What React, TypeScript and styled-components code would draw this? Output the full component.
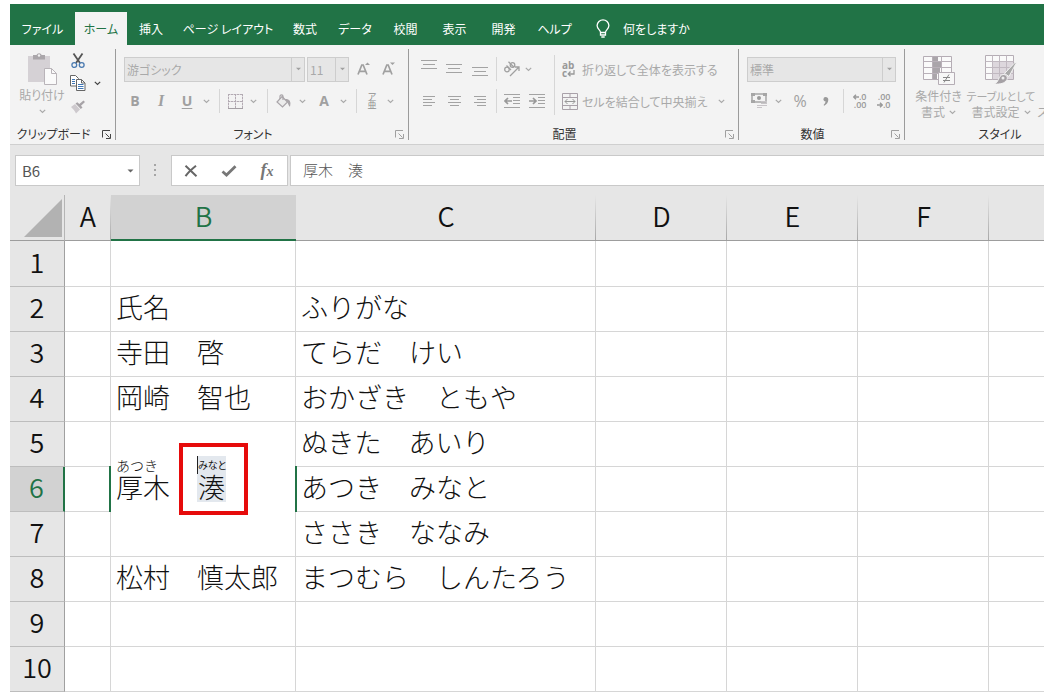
import React from "react";
import styled, { createGlobalStyle, css } from "styled-components";

const uiFont = `"Noto Sans CJK JP", "Noto Sans", sans-serif`;
const green = "#217346";
const muted = "#a9a9a9";

const GlobalStyle = createGlobalStyle`
  *, *::before, *::after { box-sizing: border-box; }
  body { margin: 0; background: #fff; font-family: ${uiFont}; }
  button, input, select { font: inherit; color: inherit; margin: 0; padding: 0; border: 0; background: none; border-radius: 0; }
  svg { display: block; flex: none; }
`;

const Window = styled.main`
  margin: 4px 10px;
  overflow: hidden;
`;

/* ---------- tab strip ---------- */

const TabStrip = styled.nav`
  display: flex;
  align-items: stretch;
  height: 41px;
  padding-top: 8px;
  background: ${green};
  font-size: 12px;
  font-feature-settings: "palt";
`;

const Tab = styled.button<{ $width: number; $active?: boolean }>`
  flex: 0 0 ${(p) => p.$width}px;
  white-space: nowrap;
  color: ${(p) => (p.$active ? green : "#fff")};
  background: ${(p) => (p.$active ? "#f3f3f3" : "transparent")};
`;

const TellMe = styled.button`
  display: flex;
  align-items: center;
  gap: 13px;
  margin-left: 15px;
  color: #fff;
  white-space: nowrap;
`;

/* ---------- ribbon ---------- */

const Ribbon = styled.div`
  display: flex;
  height: 100px;
  padding-top: 4px;
  overflow: hidden;
  background: #f3f3f3;
  border-bottom: 1px solid #cfcfcf;
  color: ${muted};
  font-size: 12px;
  font-feature-settings: "palt";
`;

const GroupBox = styled.section<{ $width: number; $last?: boolean }>`
  display: flex;
  flex-direction: column;
  flex: 0 0 ${(p) => p.$width}px;
  height: 91px;
  padding-top: 4px;
  border-right: ${(p) => (p.$last ? "0" : "1px solid #9b9b9b")};
`;

const GroupBody = styled.div`
  display: flex;
  flex: none;
  height: 72px;
`;

const GroupFooter = styled.footer`
  display: flex;
  flex: none;
  align-items: center;
  height: 18px;
  color: #333;
`;

const GroupLabel = styled.span`
  flex: 1;
  text-align: center;
  line-height: 18px;
`;

const Launcher = styled.button<{ $dark?: boolean }>`
  width: 18px;
  height: 18px;
  padding-left: 5px;
  color: ${(p) => (p.$dark ? "#444" : "#a0a0a0")};
`;

const Rows = styled.div<{ $indent: number; $width?: number }>`
  display: flex;
  flex-direction: column;
  flex: ${(p) => (p.$width ? `0 0 ${p.$width}px` : "1")};
  padding-left: ${(p) => p.$indent}px;
`;

const ToolRow = styled.div<{ $inset?: boolean }>`
  display: flex;
  align-items: center;
  height: 32px;
  padding-left: ${(p) => (p.$inset ? 2 : 0)}px;
`;

const Tool = styled.button<{ $width: number }>`
  display: flex;
  align-items: center;
  justify-content: center;
  flex: 0 0 ${(p) => p.$width}px;
  height: 24px;
  line-height: 24px;
`;

const Glyph = styled.span<{ $kind?: "italic" | "underline" | "percent" }>`
  font-family: "Open Sans", "Noto Sans", sans-serif;
  font-weight: 700;
  font-size: 14px;
  color: #a0a0a0;
  ${(p) => p.$kind === "italic" && css`font-family: "Liberation Serif", serif; font-style: italic; font-size: 16px;`}
  ${(p) => p.$kind === "underline" && css`text-decoration: underline; text-underline-offset: 2px;`}
  ${(p) => p.$kind === "percent" && css`font-weight: 400; font-size: 16px;`}
`;

const Divider = styled.span<{ $width: number }>`
  display: flex;
  justify-content: center;
  flex: 0 0 ${(p) => p.$width}px;
  &::before {
    content: "";
    width: 1px;
    height: 24px;
    background: #d6d6d6;
  }
`;

const TallDivider = styled.span`
  width: 1px;
  height: 60px;
  margin-top: 2px;
  background: #d6d6d6;
`;

const TextTool = styled.button`
  display: flex;
  align-items: center;
  gap: 4px;
  white-space: nowrap;
`;

const Combo = styled.label<{ $width: number }>`
  display: flex;
  flex: 0 0 ${(p) => p.$width}px;
  height: 25px;
  margin-right: 2px;
  background: #e6e6e6;
  border: 1px solid #cdcdcd;
`;

const ComboSelect = styled.select`
  flex: 1;
  min-width: 0;
  padding-left: 2px;
  appearance: none;
  opacity: 1;
`;

const ComboArrow = styled.span`
  display: flex;
  align-items: center;
  justify-content: center;
  width: 13px;
  border-left: 1px solid #cdcdcd;
`;

const PasteButton = styled.button`
  display: flex;
  flex-direction: column;
  align-items: center;
  width: 52px;
  height: 66px;
  margin-left: 6px;
  white-space: nowrap;
  line-height: 16px;
  svg:last-child { margin-top: 6px; }
`;

const ClipColumn = styled.div`
  display: flex;
  flex-direction: column;
`;

const ClipRow = styled.div`
  display: flex;
  align-items: center;
  height: 24px;
  &:first-child { height: 16px; margin-bottom: 2px; }
`;

const StyleButton = styled.button<{ $width: number }>`
  display: flex;
  flex-direction: column;
  align-items: center;
  flex: 0 0 ${(p) => p.$width}px;
  min-width: 0;
  height: 70px;
  padding-top: 2px;
  white-space: nowrap;
  line-height: 16px;
`;

const StyleLine = styled.span<{ $compact?: boolean }>`
  display: flex;
  align-items: center;
  gap: 4px;
  height: 16px;
  font-size: ${(p) => (p.$compact ? 11 : 12)}px;
`;

const StyleArt = styled.span`
  height: 33px;
`;

/* ---------- formula bar ---------- */

const FormulaBar = styled.div`
  display: flex;
  align-items: flex-start;
  height: 50px;
  padding: 10px 0 0 5px;
  background: #e6e6e6;
  color: #555;
`;

const NameBox = styled.div`
  display: flex;
  align-items: center;
  width: 125px;
  height: 31px;
  background: #fff;
  border: 1px solid #c9c9c9;
`;

const NameInput = styled.input`
  flex: 1;
  min-width: 0;
  height: 29px;
  padding-left: 6px;
  font-size: 15px;
`;

const NameArrow = styled.button`
  display: flex;
  align-items: center;
  justify-content: center;
  width: 18px;
  height: 29px;
`;

const Grip = styled.span`
  display: flex;
  align-items: center;
  justify-content: center;
  width: 31px;
  height: 31px;
`;

const FormulaButtons = styled.div`
  display: flex;
  align-items: center;
  width: 117px;
  height: 31px;
  background: #fff;
  border: 1px solid #c9c9c9;
`;

const FormulaInput = styled.input`
  flex: 1;
  min-width: 0;
  height: 31px;
  margin-left: 2px;
  padding: 0 0 2px 12px;
  background: #fff;
  border: 1px solid #c9c9c9;
  border-right: 0;
  font-size: 15px;
  font-weight: 300;
`;

/* ---------- worksheet ---------- */

const Sheet = styled.table`
  width: 100%;
  table-layout: fixed;
  border-collapse: separate;
  border-spacing: 0;
  font-size: 27px;
  font-weight: 300;
  line-height: 40px;
  color: #111;
  tbody tr:first-child > * { height: 46px; }
`;

const headLine = "linear-gradient(to bottom, #e6e6e6, #a8a8a8)";

const Corner = styled.th`
  height: 46px;
  padding: 0 2px 3px 0;
  vertical-align: bottom;
  background: #e6e6e6;
  border-right: 1px solid #b5b5b5;
  border-bottom: 1px solid #9d9d9d;
  svg { margin-left: auto; }
`;

const ColumnHead = styled.th<{ $active?: boolean }>`
  height: 46px;
  padding: 0 0 3px;
  font-weight: 350;
  color: ${(p) => (p.$active ? green : "#111")};
  background: ${(p) => (p.$active ? "#d2d2d2" : `${headLine} right / 1px 100% no-repeat #e6e6e6`)};
  border-bottom: ${(p) => (p.$active ? `2px solid ${green}` : "1px solid #9d9d9d")};
  &:last-child { background: #e6e6e6; }
`;

const RowHead = styled.th<{ $active?: boolean }>`
  height: 45px;
  padding: 0 0 4px;
  font-weight: 350;
  color: ${(p) => (p.$active ? green : "#111")};
  background: ${(p) => (p.$active ? "#d2d2d2" : "#e6e6e6")};
  border-bottom: 1px solid #bdbdbd;
  border-right: ${(p) => (p.$active ? `2px solid ${green}` : "1px solid #a0a0a0")};
`;

const Cell = styled.td`
  height: 45px;
  padding: 0 0 4px 5px;
  white-space: nowrap;
  border-right: 1px solid #d6d6d6;
  border-bottom: 1px solid #d6d6d6;
  &:last-child { border-right: 0; }
`;

const EditingCell = styled(Cell)`
  position: relative;
  padding: 0;
`;

const EditLine = styled.div`
  display: flex;
  align-items: flex-end;
  height: 80px;
  margin-bottom: 54px;
  padding-left: 5px;
`;

const Phonetic = styled.span<{ $selected?: boolean }>`
  display: flex;
  flex-direction: column;
  width: ${(p) => (p.$selected ? 29 : 54)}px;
  height: 46px;
  margin-left: ${(p) => (p.$selected ? 27 : 0)}px;
  padding-left: ${(p) => (p.$selected ? 1 : 0)}px;
  background: ${(p) => (p.$selected ? "#e3e8ee" : "transparent")};
`;

const Reading = styled.span<{ $tight?: boolean }>`
  height: 16px;
  line-height: 18px;
  white-space: nowrap;
  font-size: ${(p) => (p.$tight ? 10 : 14)}px;
  font-weight: ${(p) => (p.$tight ? 400 : 300)};
  font-feature-settings: ${(p) => (p.$tight ? `"palt"` : "normal")};
`;

const BaseText = styled.span`
  height: 30px;
  line-height: 30px;
`;

const CellEdge = styled.span<{ $side: "left" | "right" }>`
  position: absolute;
  top: 44px;
  ${(p) => p.$side}: -2px;
  width: 2px;
  height: 46px;
  background: ${green};
`;

const Caret = styled.span`
  position: absolute;
  top: 34px;
  left: 86px;
  width: 1px;
  height: 18px;
  background: #222;
`;

const Highlight = styled.span`
  position: absolute;
  top: 21px;
  left: 68px;
  width: 69px;
  height: 72px;
  border: 4px solid #e60b0b;
`;

/* ---------- icons ---------- */

const Chevron = ({ color = muted }: { color?: string }) => (
  <svg width="7" height="5" viewBox="0 0 7 5" fill="none" stroke={color} strokeWidth="1.2">
    <path d="M.8 .8 3.5 3.5 6.2 .8" />
  </svg>
);

const Triangle = ({ color = "#a0a0a0", size = 5 }: { color?: string; size?: number }) => (
  <svg width={size} height="4" viewBox="0 0 6 4" fill={color}>
    <path d="M0 .5h6L3 3.5z" />
  </svg>
);

const LauncherIcon = () => (
  <svg width="9" height="9" viewBox="0 0 9 9" fill="none" stroke="currentColor">
    <path d="M.5 7.5V.5H8M3.5 3.5l4 4M8.5 4v4.5H4" />
  </svg>
);

const Bulb = () => (
  <svg width="14" height="19" viewBox="0 0 14 19" fill="none" stroke="#fff" strokeWidth="1.3">
    <path d="M4.5 13.5c0-2.6-3.4-3.4-3.4-7A5.9 5.9 0 0 1 7 .8a5.9 5.9 0 0 1 5.9 5.7c0 3.6-3.4 4.4-3.4 7zM4.5 13.5v2.5h5v-2.5M5.3 18h3.4" />
  </svg>
);

const PasteIcon = () => (
  <svg width="32" height="34" viewBox="0 0 32 34">
    <path d="M2 3h22v26H2z" fill="#d5d1d5" />
    <path d="M7 6.500V2h3.500a2.800 2.800 0 0 1 5.200 0H19v4.500z" fill="#aaa6aa" />
    <circle cx="13" cy="2.500" r="1.200" fill="#f3f3f3" />
    <path d="M18.500 15.500h7l5 5v11h-12z" fill="#fafafa" stroke="#b9b4b9" />
    <path d="M25.500 15.500v5h5" fill="none" stroke="#b9b4b9" />
  </svg>
);

const ScissorsIcon = () => (
  <svg width="14" height="16" viewBox="0 0 14 16" fill="none">
    <path d="M2.5 .5 9 10M11.5 .5 5 10" stroke="#555" strokeWidth="1.8" />
    <circle cx="3.3" cy="12" r="2.4" stroke="#4a7ab0" strokeWidth="1.3" />
    <circle cx="10.7" cy="12" r="2.4" stroke="#4a7ab0" strokeWidth="1.3" />
  </svg>
);

const CopyIcon = () => (
  <svg width="16" height="16" viewBox="0 0 16 16" fill="#fff" stroke="#666">
    <path d="M.5 .5h5l3 3v7.500h-8z" />
    <path d="M2 4.5h3M2 6.5h3M2 8.5h3" stroke="#3f76b5" />
    <path d="M6.5 4.5h5l3.500 3.500v7.500H6.500z" />
    <path d="M11.5 4.5V8H15" fill="none" />
    <path d="M8 9.5h5.5M8 11.5h5.5M8 13.5h5.5" stroke="#3f76b5" />
  </svg>
);

const BrushIcon = () => (
  <svg width="16" height="14" viewBox="0 0 16 14">
    <path d="M1 7l4-3 5 5.5L6 13.5C5 11 3 9 1 7z" fill="#cdc9cd" />
    <path d="M5.5 3.5l1.8-1.3 2 1.8L13.500 .5l1.500 1.600-4 3.700 1.500 1.700-1.700 1.600z" fill="#a7a3a7" />
  </svg>
);

const FontSize = ({ down }: { down?: boolean }) => (
  <svg width="14" height="16" viewBox="0 0 14 16">
    <path d="M1 13.500 4.800 4h1.400L10 13.500M2.500 10.300h6" fill="none" stroke="#a0a0a0" strokeWidth="1.700" />
    <path d={down ? "M8 1.500h5l-2.500 2.500z" : "M8 4h5l-2.500-2.500z"} fill="#a0a0a0" />
  </svg>
);

const BordersIcon = () => (
  <svg width="15" height="15" viewBox="0 0 15 15" fill="none">
    <path d="M.5 .5h14v14H.5zM7.500 .5v14M.5 7.500h14" stroke="#d9d3d9" />
    <path d="M.5 0v14M7.500 0v14M14.500 0v14M0 .5h15M0 7.500h15" stroke="#b3abb3" strokeDasharray="2 1" />
    <path d="M0 14.500h15" stroke="#a49fa4" />
  </svg>
);

const FillIcon = () => (
  <svg width="15" height="15" viewBox="0 0 15 15" fill="none" stroke="#a9a5a9" strokeWidth="1.200">
    <path d="M6 2.500l5.500 5.500-5 5L1 8z" fill="#ececec" />
    <path d="M4 5V2.200C4 .3 7 .3 7 2.200V6" />
    <path d="M10 5.500c3 0 4.500 2 3.600 6-1-1.200-.6-3-3.600-6z" fill="#a9a5a9" />
  </svg>
);

const Lines = ({ rows, height = 16 }: { rows: [number, number, number][]; height?: number }) => (
  <svg width="16" height={height} viewBox={`0 0 16 ${height}`} stroke="#a3a3a3">
    {rows.map(([x1, x2, y]) => (
      <path key={y} d={`M${x1} ${y}.5H${x2}`} />
    ))}
  </svg>
);

const OrientIcon = () => (
  <svg width="18" height="16" viewBox="0 0 18 16" fill="none" stroke="#a0a0a0" strokeWidth="1.300">
    <circle cx="4" cy="8.500" r="2.300" />
    <path d="M3.500 4.500 8 9M5.500 .8l5.500 5.500" />
    <circle cx="9.500" cy="4" r="2.300" />
    <path d="M7 15 15.500 6.500M12 6h4v4" />
  </svg>
);

const Indent = ({ out }: { out?: boolean }) => (
  <svg width="16" height="15" viewBox="0 0 16 15" fill="none" stroke="#a3a3a3">
    <path d="M0 .5h16M9 3.500h7M9 6.500h7M9 9.500h7M0 13.500h16" />
    <path d={out ? "M0 7h7M4 4l3 3-3 3" : "M1 7h7M4 4 1 7l3 3"} strokeWidth="1.700" stroke="#999" />
  </svg>
);

const MergeIcon = () => (
  <svg width="16" height="17" viewBox="0 0 16 17" fill="none" stroke="#a9a1a9">
    <path d="M.5 .5h15v16H.5zM.5 4.500h15M.5 12.500h15M8 .5v4M8 12.500v4" />
    <path d="M3 8.500h10M5.500 6 3 8.500 5.500 11M10.500 6 13 8.500 10.500 11" stroke="#999" />
  </svg>
);

const CommaIcon = () => (
  <svg width="6" height="9" viewBox="0 0 6 9" fill="#999">
    <path d="M2.600 0A2.300 2.300 0 0 0 .4 2.200c0 1.200.9 2.100 2.100 2.100C2.500 5.800 1.800 7 .6 7.900L1.200 8.700C3.800 7.500 5.300 5.300 5.300 2.800 5.300 1 4.200 0 2.600 0z" />
  </svg>
);

const WrapArt = styled.span`
  display: grid;
  grid-template-rows: 8px 8px;
  width: 16px;
  color: #999;
  font: 700 10px/8px "Open Sans", sans-serif;
  text-align: left;
`;

const WrapSecond = styled.span`
  display: flex;
  align-items: center;
`;

const PhoneticArt = styled.span`
  display: grid;
  grid-template-rows: 8px 9px;
  font-size: 9px;
  line-height: 8px;
  color: #8f8f8f;
  text-align: center;
`;

const MoneyIcon = () => (
  <svg width="17" height="17" viewBox="0 0 17 17">
    <path d="M1 1h14v8H1z" fill="#f3f3f3" stroke="#a6a6a6" strokeWidth="1.500" />
    <path d="M0 0h4v3H0zM12 0h4v3h-4zM0 7h4v3H0z" fill="#a6a6a6" />
    <circle cx="8" cy="5" r="2" fill="#9b9b9b" />
    <path d="M6 12.500h5M6 14.500h5M10 8.500h6M10 10.500h6M10 12.500h6" stroke="#c8c4c8" />
  </svg>
);

const DecimalArt = styled.span`
  display: grid;
  grid-template-rows: 8px 8px;
  justify-items: end;
  width: 15px;
  font: 600 9px/8px "Open Sans", sans-serif;
  color: #999;
`;

const DecimalLine = styled.span`
  display: flex;
  align-items: center;
`;

const SmallArrow = ({ right }: { right?: boolean }) => (
  <svg width="6" height="6" viewBox="0 0 6 6" fill="none" stroke="#999" strokeWidth="1.400">
    <path d={right ? "M0 3h5M3 .8 5.200 3 3 5.200" : "M1 3h5M3 .8.8 3 3 5.200"} />
  </svg>
);

const ConditionalIcon = () => (
  <svg width="32" height="31" viewBox="0 0 32 31">
    <path d="M.5 1.500h28v23H.5z" fill="#fafafa" stroke="#b5adb5" />
    <path d="M9 2h6v5H9zM9 7h10v6H9zM9 13h8v6H9zM9 19h5v5H9z" fill="#aaa5aa" />
    <path d="M.5 6.500h28M.5 12.500h28M.5 18.500h28M9.500 1.500v23M18.500 1.500v23" fill="none" stroke="#b9b1b9" />
    <path d="M15.500 17.500h16v12h-16z" fill="#f7f7f7" stroke="#b5adb5" />
    <path d="M20 22.500h7M20 25.500h7M26 19.500l-5 8" fill="none" stroke="#888" />
  </svg>
);

const TableStyleIcon = () => (
  <svg width="32" height="31" viewBox="0 0 32 31">
    <path d="M.5 .5h28v24H.5z" fill="#fafafa" stroke="#b5adb5" />
    <path d="M8 7h20v17H8z" fill="#ddd7dd" />
    <path d="M.5 6.500h28M.5 12.500h28M.5 18.500h28M7.500 .5v24M14.500 .5v24M21.500 .5v24" fill="none" stroke="#c1b9c1" />
    <path d="M31.500 7.500 24 21.500l-4.500-3L30 7.500z" fill="#aaa" stroke="#f3f3f3" />
    <path d="M18 19.500c3 0 5 2 4 5-2 4-7 5-13 4.500 5-1 4-8.500 9-9.500z" fill="#a5a1a5" stroke="#f3f3f3" />
    <circle cx="18" cy="23" r="1.500" fill="#eee" />
  </svg>
);

const CrossIcon = () => (
  <svg width="14" height="12" viewBox="0 0 14 12" fill="none" stroke="#666" strokeWidth="2">
    <path d="M1.500 .8C5 4 9 8 12.500 11.200M12 .8C8 4 4.500 7 1.500 11.200" />
  </svg>
);

const CheckIcon = () => (
  <svg width="16" height="12" viewBox="0 0 16 12" fill="none" stroke="#777" strokeWidth="2.800">
    <path d="M1.500 6.500 5.500 10 14.500 1.200" />
  </svg>
);

const FxText = styled.span`
  font: italic 700 18px/20px "Liberation Serif", serif;
  color: #777;
  small { font-size: 14px; }
`;

const GripDots = () => (
  <svg width="3" height="13" viewBox="0 0 3 13" fill="#a5a5a5">
    <path d="M0 0h2v2H0zM0 5h2v2H0zM0 10h2v2H0z" />
  </svg>
);

const CornerMark = () => (
  <svg width="38" height="38" viewBox="0 0 38 38">
    <path d="M38 0v38H0z" fill="#b2b2b2" />
  </svg>
);

/* ---------- composed parts ---------- */

interface GroupProps {
  label: string;
  width: number;
  darkLauncher?: boolean;
  last?: boolean;
  children: React.ReactNode;
}

const Group = ({ label, width, darkLauncher, last, children }: GroupProps) => (
  <GroupBox $width={width} $last={last} aria-label={label}>
    <GroupBody>{children}</GroupBody>
    <GroupFooter>
      <GroupLabel>{label}</GroupLabel>
      {!last && (
        <Launcher $dark={darkLauncher} aria-label={`${label}の設定`}>
          <LauncherIcon />
        </Launcher>
      )}
    </GroupFooter>
  </GroupBox>
);

const ComboBox = ({ label, value, width }: { label: string; value: string; width: number }) => (
  <Combo $width={width}>
    <ComboSelect aria-label={label} defaultValue={value} disabled>
      <option>{value}</option>
    </ComboSelect>
    <ComboArrow>
      <Triangle />
    </ComboArrow>
  </Combo>
);

const More = ({ width, color }: { width: number; color?: string }) => (
  <Tool $width={width} aria-label="その他">
    <Chevron color={color} />
  </Tool>
);

const tabs = [
  { name: "ファイル", width: 65 },
  { name: "ホーム", width: 52 },
  { name: "挿入", width: 48 },
  { name: "ページ レイアウト", width: 106 },
  { name: "数式", width: 48 },
  { name: "データ", width: 52 },
  { name: "校閲", width: 49 },
  { name: "表示", width: 49 },
  { name: "開発", width: 49 },
  { name: "ヘルプ", width: 53 },
];

const columns = ["A", "B", "C", "D", "E", "F", ""];

const rows: { name?: string; reading?: string }[] = [
  {},
  { name: "氏名", reading: "ふりがな" },
  { name: "寺田　啓", reading: "てらだ　けい" },
  { name: "岡崎　智也", reading: "おかざき　ともや" },
  { reading: "ぬきた　あいり" },
  { reading: "あつき　みなと" },
  { reading: "ささき　ななみ" },
  { name: "松村　慎太郎", reading: "まつむら　しんたろう" },
  {},
  {},
];

const NameEditor = () => (
  <EditingCell rowSpan={3}>
    <EditLine>
      <Phonetic>
        <Reading>あつき</Reading>
        <BaseText>厚木</BaseText>
      </Phonetic>
      <Phonetic $selected>
        <Reading $tight>みなと</Reading>
        <BaseText>湊</BaseText>
      </Phonetic>
    </EditLine>
    <CellEdge $side="left" />
    <CellEdge $side="right" />
    <Caret />
    <Highlight />
  </EditingCell>
);

export default function App() {
  return (
    <Window>
      <GlobalStyle />
      <TabStrip>
        {tabs.map((t) => (
          <Tab key={t.name} $width={t.width} $active={t.name === "ホーム"}>
            {t.name}
          </Tab>
        ))}
        <TellMe>
          <Bulb />
          何をしますか
        </TellMe>
      </TabStrip>

      <Ribbon>
        <Group label="クリップボード" width={106} darkLauncher>
          <PasteButton>
            <PasteIcon />
            <span>貼り付け</span>
            <Chevron />
          </PasteButton>
          <ClipColumn>
            <ClipRow>
              <Tool $width={20} aria-label="切り取り"><ScissorsIcon /></Tool>
            </ClipRow>
            <ClipRow>
              <Tool $width={20} aria-label="コピー"><CopyIcon /></Tool>
              <More width={18} color="#444" />
            </ClipRow>
            <ClipRow>
              <Tool $width={20} aria-label="書式のコピー"><BrushIcon /></Tool>
            </ClipRow>
          </ClipColumn>
        </Group>

        <Group label="フォント" width={293}>
          <Rows $indent={6}>
            <ToolRow $inset>
              <ComboBox label="フォント" value="游ゴシック" width={181} />
              <ComboBox label="フォント サイズ" value="11" width={42} />
              <Tool $width={26} aria-label="拡大"><FontSize /></Tool>
              <Tool $width={24} aria-label="縮小"><FontSize down /></Tool>
            </ToolRow>
            <ToolRow>
              <Tool $width={26}><Glyph>B</Glyph></Tool>
              <Tool $width={26}><Glyph $kind="italic">I</Glyph></Tool>
              <Tool $width={26}><Glyph $kind="underline">U</Glyph></Tool>
              <More width={12} />
              <Divider $width={14} />
              <Tool $width={18} aria-label="罫線"><BordersIcon /></Tool>
              <More width={18} />
              <Divider $width={10} />
              <Tool $width={22} aria-label="塗りつぶし"><FillIcon /></Tool>
              <More width={16} />
              <Tool $width={28}><Glyph>A</Glyph></Tool>
              <More width={10} />
              <Divider $width={16} />
              <Tool $width={16}>
                <PhoneticArt><span>ア</span><span>亜</span></PhoneticArt>
              </Tool>
              <More width={20} />
            </ToolRow>
          </Rows>
        </Group>

        <Group label="配置" width={330}>
          <Rows $indent={8} $width={145}>
            <ToolRow>
              <Tool $width={24} aria-label="上揃え"><Lines rows={[[0, 16, 0], [2, 14, 4], [0, 16, 8]]} height={18} /></Tool>
              <Tool $width={26} aria-label="上下中央揃え"><Lines rows={[[0, 16, 4], [2, 14, 8], [0, 16, 12]]} height={18} /></Tool>
              <Tool $width={26} aria-label="下揃え"><Lines rows={[[0, 16, 7], [2, 14, 11], [0, 16, 15]]} height={18} /></Tool>
              <Divider $width={6} />
              <Tool $width={25} aria-label="方向"><OrientIcon /></Tool>
              <More width={9} />
            </ToolRow>
            <ToolRow>
              <Tool $width={24} aria-label="左揃え"><Lines rows={[[2, 14, 3], [2, 11, 6], [2, 14, 9], [2, 11, 12]]} /></Tool>
              <Tool $width={26} aria-label="中央揃え"><Lines rows={[[2, 15, 3], [4, 13, 6], [2, 15, 9], [4, 13, 12]]} /></Tool>
              <Tool $width={26} aria-label="右揃え"><Lines rows={[[2, 14, 3], [5, 14, 6], [2, 14, 9], [5, 14, 12]]} /></Tool>
              <Divider $width={6} />
              <Tool $width={25} aria-label="インデントを減らす"><Indent /></Tool>
              <Tool $width={26} aria-label="インデントを増やす"><Indent out /></Tool>
            </ToolRow>
          </Rows>
          <TallDivider />
          <Rows $indent={7}>
            <ToolRow>
              <TextTool>
                <WrapArt>
                  <span>ab</span>
                  <WrapSecond>c
                    <svg width="8" height="7" viewBox="0 0 8 7" fill="none" stroke="#999" strokeWidth="1.300">
                      <path d="M7 0v4H1.500M3.500 1.500 1.200 4l2.300 2.300" />
                    </svg>
                  </WrapSecond>
                </WrapArt>
                折り返して全体を表示する
              </TextTool>
            </ToolRow>
            <ToolRow>
              <TextTool>
                <MergeIcon />
                セルを結合して中央揃え
              </TextTool>
              <More width={28} />
            </ToolRow>
          </Rows>
        </Group>

        <Group label="数値" width={166}>
          <Rows $indent={8}>
            <ToolRow>
              <ComboBox label="表示形式" value="標準" width={149} />
            </ToolRow>
            <ToolRow>
              <Tool $width={24} aria-label="通貨"><MoneyIcon /></Tool>
              <More width={14} />
              <Tool $width={30}><Glyph $kind="percent">%</Glyph></Tool>
              <Tool $width={22} aria-label="桁区切り"><CommaIcon /></Tool>
              <Divider $width={12} />
              <Tool $width={20}>
                <DecimalArt>
                  <DecimalLine><SmallArrow />.0</DecimalLine>
                  <DecimalLine>.00</DecimalLine>
                </DecimalArt>
              </Tool>
              <Tool $width={28}>
                <DecimalArt>
                  <DecimalLine>.00</DecimalLine>
                  <DecimalLine><SmallArrow right />.0</DecimalLine>
                </DecimalArt>
              </Tool>
            </ToolRow>
          </Rows>
        </Group>

        <Group label="スタイル" width={190} last>
          <Rows $indent={6}>
            <GroupBody>
              <StyleButton $width={55}>
                <StyleArt><ConditionalIcon /></StyleArt>
                <StyleLine>条件付き</StyleLine>
                <StyleLine>書式<Chevron /></StyleLine>
              </StyleButton>
              <StyleButton $width={70}>
                <StyleArt><TableStyleIcon /></StyleArt>
                <StyleLine $compact>テーブルとして</StyleLine>
                <StyleLine>書式設定<Chevron /></StyleLine>
              </StyleButton>
              <StyleButton $width={46}>
                <StyleArt />
                <StyleLine />
                <StyleLine>スタイル</StyleLine>
              </StyleButton>
            </GroupBody>
          </Rows>
        </Group>
      </Ribbon>

      <FormulaBar>
        <NameBox>
          <NameInput aria-label="名前ボックス" defaultValue="B6" />
          <NameArrow aria-label="名前の一覧"><Triangle color="#666" size={7} /></NameArrow>
        </NameBox>
        <Grip><GripDots /></Grip>
        <FormulaButtons>
          <Tool $width={38} aria-label="キャンセル"><CrossIcon /></Tool>
          <Tool $width={38} aria-label="入力"><CheckIcon /></Tool>
          <Tool $width={38}><FxText>f<small>x</small></FxText></Tool>
        </FormulaButtons>
        <FormulaInput aria-label="数式バー" defaultValue="厚木　湊" />
      </FormulaBar>

      <Sheet>
        <colgroup>
          <col width="55" />
          <col width="46" />
          <col width="185" />
          <col width="300" />
          <col width="131" />
          <col width="131" />
          <col width="131" />
          <col />
        </colgroup>
        <thead>
          <tr>
            <Corner><CornerMark /></Corner>
            {columns.map((c) => (
              <ColumnHead key={c} scope="col" $active={c === "B"}>{c}</ColumnHead>
            ))}
          </tr>
        </thead>
        <tbody>
          {rows.map((row, i) => {
            const n = i + 1;
            return (
              <tr key={n}>
                <RowHead scope="row" $active={n === 6}>{n}</RowHead>
                <Cell />
                {n === 5 && <NameEditor />}
                {(n < 5 || n > 7) && <Cell>{row.name}</Cell>}
                <Cell>{row.reading}</Cell>
                <Cell />
                <Cell />
                <Cell />
                <Cell />
              </tr>
            );
          })}
        </tbody>
      </Sheet>
    </Window>
  );
}
